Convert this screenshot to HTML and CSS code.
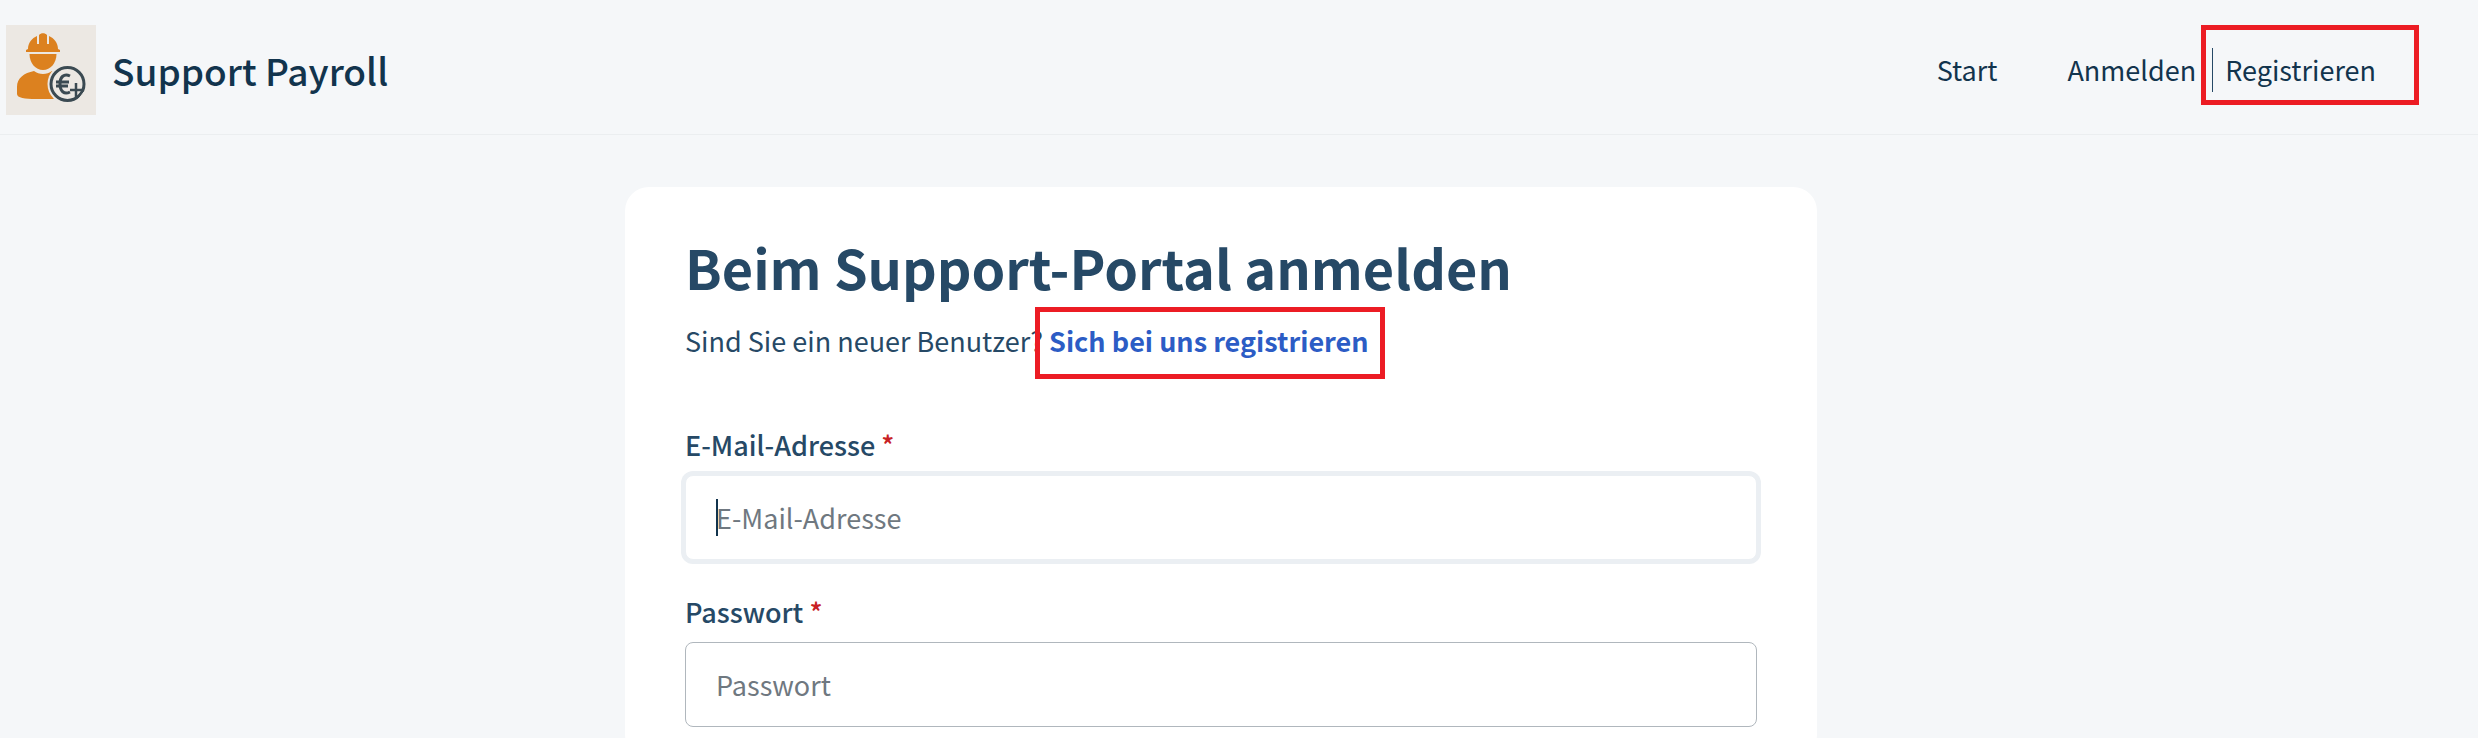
FILE: index.html
```html
<!DOCTYPE html>
<html lang="de">
  <head>
    <meta charset="UTF-8">
    <meta name="viewport" content="width=device-width, initial-scale=1.0">
    <title>Support Payroll</title>
    <link rel="stylesheet" href="styles.css">
  </head>
  <body>
    <header class="header">
      <a class="brand" href="#">
        <svg class="logo" viewBox="0 0 90 90" aria-hidden="true">
          <rect width="90" height="90" fill="#ece8e3"/>
          <g fill="#dc811f">
            <path d="M20 27v-2l2-1c0-6 4-11 9-13v8h2v-9c2-2.500 6-2.500 8 0v9h2v-8c5 2 9 7 9 13l2 1v2z"/>
            <path d="M23.500 29h27c0 9-6 16-13.500 16S23.500 38 23.500 29z"/>
            <path d="M11 62c0-9 7-14 17-16 5 4 13 4 18 0l9 4v24H30c-11 0-19-1-19-5z"/>
          </g>
          <circle cx="61.500" cy="59" r="20" fill="#ece8e3"/>
          <circle cx="61.500" cy="59" r="16.500" fill="#ece8e3" stroke="#3b4a52" stroke-width="3"/>
          <g fill="none" stroke="#3b4a52" stroke-width="3">
            <path d="M64 51c-6-3-10 1-10 8s4 11 10 8"/>
            <path d="M50 57h13M50 61h12"/>
            <path d="M70 58v14M64 65h12" stroke-width="2.500"/>
          </g>
          <path d="M72 75l6-8" stroke="#ece8e3" stroke-width="1"/>
        </svg>
        <span class="brand-name">Support Payroll</span>
      </a>
      <nav class="nav">
        <a href="#">Start</a>
        <div class="account">
          <a href="#">Anmelden</a>
          <a class="register" href="#">Registrieren</a>
        </div>
      </nav>
    </header>

    <main class="main">
      <section class="card">
        <h1>Beim Support-Portal anmelden</h1>
        <p class="intro">Sind Sie ein neuer Benutzer? <a class="signup" href="#">Sich bei uns registrieren</a></p>
        <form>
          <div class="field">
            <label for="email">E-Mail-Adresse <span class="required">*</span></label>
            <div class="control">
              <input class="active" type="email" id="email" placeholder="E-Mail-Adresse">
              <span class="caret"></span>
            </div>
          </div>
          <div class="field">
            <label for="password">Passwort <span class="required">*</span></label>
            <div class="control">
              <input type="password" id="password" placeholder="Passwort">
            </div>
          </div>
        </form>
      </section>
    </main>
  </body>
</html>
```

FILE: styles.css
```css
* {
  box-sizing: border-box;
}
body {
  margin: 0;
  background-color: #f5f7f9;
  color: #264966;
  font-family: "Noto Sans CJK SC", "Noto Sans", sans-serif;
  font-size: 27px;
  line-height: 40px;
}
a {
  color: inherit;
  text-decoration: none;
}

.header {
  display: flex;
  justify-content: space-between;
  align-items: center;
  padding: 25px 102px 19px 6px;
  border-bottom: 1px solid #ebeef0;
  color: #12344d;
}
.brand {
  display: flex;
  align-items: center;
  gap: 16px;
}
.logo {
  width: 90px;
  height: 90px;
}
.brand-name {
  font-size: 37px;
  font-weight: 500;
}
.nav {
  display: flex;
  align-items: center;
  gap: 70px;
}
.account {
  display: flex;
  align-items: center;
  gap: 16px;
}
.register {
  position: relative;
  padding: 2px 0 2px 12px;
  border-left: 1px solid #264966;
}
.register::after,
.signup::after {
  content: "";
  position: absolute;
  border: 5px solid #ec1c24;
  pointer-events: none;
}
.register::after {
  inset: -23px -43px -13px -12px;
}

.main {
  padding: 52px 36px 0 0;
}
.card {
  max-width: 1192px;
  margin: 0 auto;
  padding: 46px 60px 0;
  border-radius: 24px;
  background-color: #fff;
}
h1 {
  margin: 0;
  font-size: 54px;
  line-height: 68px;
}
.intro {
  margin: 20px 0 64px;
}
.signup {
  position: relative;
  color: #2c5cc5;
  font-weight: 700;
}
.signup::after {
  inset: -14px -16px -19px -14px;
}

.field {
  padding-bottom: 32px;
}
label {
  display: block;
  margin-bottom: 10px;
  font-weight: 500;
}
.required {
  color: #c82124;
}
.control {
  position: relative;
}
input {
  display: block;
  width: 100%;
  height: 85px;
  padding: 0 30px;
  border: 1px solid #b0b7bd;
  border-radius: 8px;
  background-color: #fff;
  color: #12344d;
  font: inherit;
}
input::placeholder {
  color: #6f7880;
  opacity: 1;
}
input:focus,
input.active {
  outline: none;
  border-color: #ebeff3;
  box-shadow: 0 0 0 4px #ebeff3;
}
.caret {
  position: absolute;
  top: 24px;
  left: 31px;
  width: 2px;
  height: 37px;
  background-color: #12344d;
}
```
